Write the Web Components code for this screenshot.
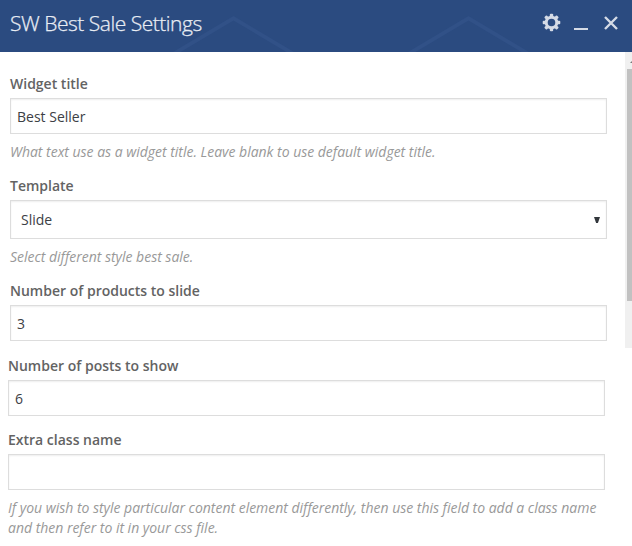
<!DOCTYPE html>
<html lang="en">
<head>
<meta charset="utf-8">
<title>SW Best Sale Settings</title>
<style>
body{margin:0;background:#fff;font:14px/20px "Open Sans","Noto Sans",sans-serif;color:#32373c}
</style>
</head>
<body>
<settings-panel>
  <panel-header slot="header">SW Best Sale Settings</panel-header>
  <scroll-pane>
    <form-field label="Widget title" value="Best Seller">What text use as a widget title. Leave blank to use default widget title.</form-field>
    <form-field label="Template" value="Slide" kind="select">Select different style best sale.</form-field>
    <form-field label="Number of products to slide" value="3"></form-field>
  </scroll-pane>
  <field-group>
    <form-field label="Number of posts to show" value="6"></form-field>
    <form-field label="Extra class name" value="">If you wish to style particular content element differently, then use this field to add a class name and then refer to it in your css file.</form-field>
  </field-group>
</settings-panel>
<script>
function define(name, html, setup) {
  customElements.define(name, class extends HTMLElement {
    constructor() {
      super();
      this.attachShadow({ mode: 'open' }).innerHTML = html;
    }
    connectedCallback() { if (setup) setup(this, this.shadowRoot); }
  });
}

define('settings-panel', `
<style>:host{display:flex;flex-direction:column;width:632px;height:546px;overflow:hidden;background:#fff}</style>
<slot name="header"></slot><slot></slot>`);

let gear = '';
for (let i = 0; i < 8; i++) gear += `<rect x="-1.700" y="-8.800" width="3.400" height="4" rx="1" transform="rotate(${i * 45})"/>`;

define('panel-header', `
<style>
:host{display:grid;height:52px;background:#2b4b80;color:#e9edf4;overflow:hidden}
.deco,.bar{grid-area:1/1}
.bar{display:flex;align-items:center;padding:0 14px 6px 10px;box-sizing:border-box;height:52px}
h1{flex:1;margin:0;font-size:21px;line-height:28px;font-weight:300;letter-spacing:-.48px;-webkit-text-stroke:.25px #e9edf4}
.icons{display:flex;align-items:center;color:#d5dbe6}
svg{display:block}
.min{margin:0 16px 0 13px}
</style>
<svg class="deco" width="632" height="52" fill="#315187">
<path d="M173 52L233.500 16L294 52H286.500L233.500 20.500L180.500 52Z"/>
<path d="M408 52L468.500 16L529 52H521.500L468.500 20.500L415.500 52Z"/>
</svg>
<div class="bar"><h1><slot></slot></h1>
<div class="icons">
<svg width="18" height="18" viewBox="-8.500 -8.500 18 18" fill="currentColor" overflow="visible"><circle r="5.300" fill="none" stroke="currentColor" stroke-width="3"/>${gear}</svg>
<svg class="min" width="14" height="18"><rect y="14" width="14" height="2" fill="currentColor"/></svg>
<svg width="14" height="18"><path d="M1 3L13 15M13 3L1 15" stroke="currentColor" stroke-width="2.400"/></svg>
</div></div>`);

define('scroll-pane', `
<style>
:host{display:grid;grid-template-columns:1fr 7px;height:296px}
.body{display:flex;flex-direction:column;gap:14px;padding:22px 18px 0 10px}
.track{background:#f0f0f0;display:flex;flex-direction:column;align-items:flex-end;overflow:hidden}
svg{display:block}
.thumb{width:5px;height:232px;background:#c1c1c1}
</style>
<div class="body"><slot></slot></div>
<div class="track"><svg width="7" height="17"><path d="M5 11L8 8V11Z" fill="#777"/></svg><div class="thumb"></div></div>`);

define('field-group', `
<style>:host{display:flex;flex-direction:column;gap:14px;padding:8px 27px 0 8px}</style><slot></slot>`);

define('form-field', `
<style>
:host{display:block}
label{display:block;font-weight:600;color:#636363;margin-bottom:4px}
.box{display:flex;align-items:center;justify-content:space-between;box-sizing:border-box;height:36px;padding:2px 6px 0;border:1px solid #ddd;box-shadow:inset 0 1px 2px rgba(0,0,0,.07);background:#fff;color:#3c4045}
:host([kind=select]) .box{height:39px;padding:0 6px 0 10px}
svg{display:none}
:host([kind=select]) svg{display:block}
.help{font-style:italic;color:#999;margin-top:8px;letter-spacing:-.018px}
.help[hidden]{display:none}
</style>
<label></label>
<div class="box"><span></span><svg width="6" height="6" viewBox="0 0 6 6"><path d="M0 0H6L3.900 6H2.100Z" fill="#32373c"/></svg></div>
<div class="help"><slot></slot></div>`, (host, root) => {
  root.querySelector('label').textContent = host.getAttribute('label');
  root.querySelector('span').textContent = host.getAttribute('value');
  root.querySelector('.help').hidden = !host.textContent.trim();
});
</script>
</body>
</html>
